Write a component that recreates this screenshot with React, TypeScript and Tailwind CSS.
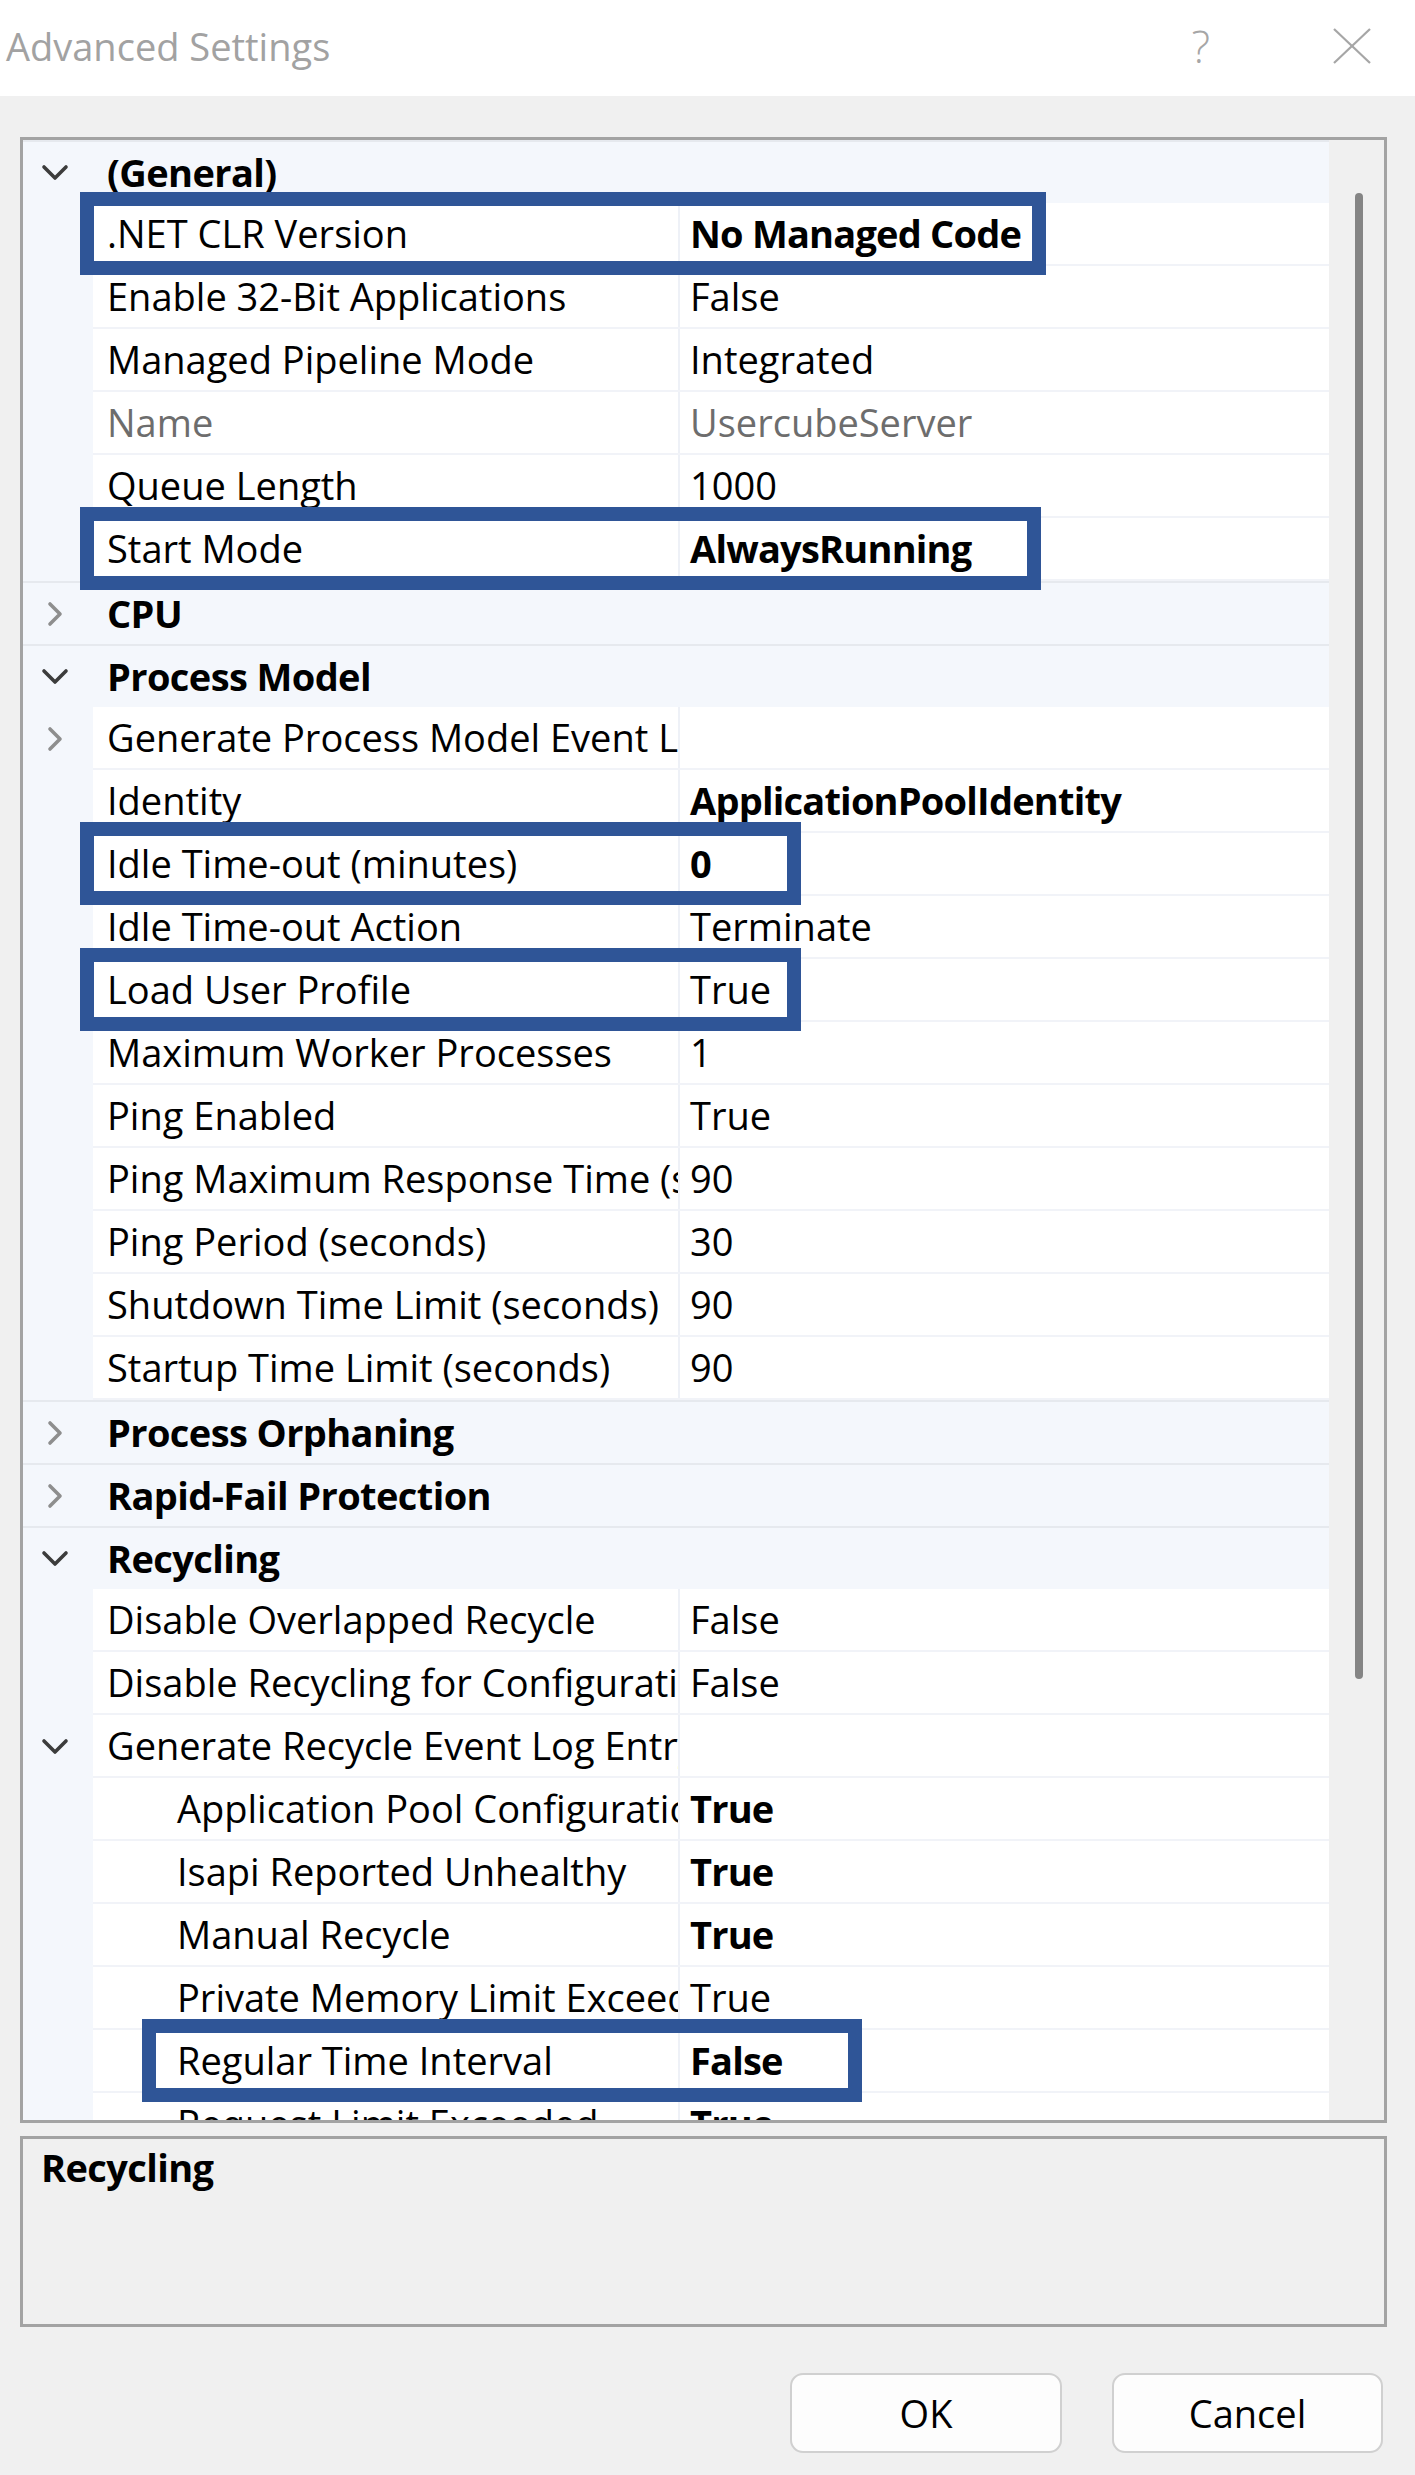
import React from "react";

type Row =
  | { kind: "cat"; label: string; open: boolean }
  | {
      kind: "prop";
      name: string;
      value: string;
      bold?: boolean;
      disabled?: boolean;
      level?: 1 | 2;
      expand?: "open" | "closed";
      box?: string;
    };

const rows: Row[] = [
  { kind: "cat", label: "(General)", open: true },
  { kind: "prop", name: ".NET CLR Version", value: "No Managed Code", bold: true, box: "left-[57px] w-[966px]" },
  { kind: "prop", name: "Enable 32-Bit Applications", value: "False" },
  { kind: "prop", name: "Managed Pipeline Mode", value: "Integrated" },
  { kind: "prop", name: "Name", value: "UsercubeServer", disabled: true },
  { kind: "prop", name: "Queue Length", value: "1000" },
  { kind: "prop", name: "Start Mode", value: "AlwaysRunning", bold: true, box: "left-[57px] w-[961px]" },
  { kind: "cat", label: "CPU", open: false },
  { kind: "cat", label: "Process Model", open: true },
  { kind: "prop", name: "Generate Process Model Event Log Entry", value: "", expand: "closed" },
  { kind: "prop", name: "Identity", value: "ApplicationPoolIdentity", bold: true },
  { kind: "prop", name: "Idle Time-out (minutes)", value: "0", bold: true, box: "left-[57px] w-[721px]" },
  { kind: "prop", name: "Idle Time-out Action", value: "Terminate" },
  { kind: "prop", name: "Load User Profile", value: "True", box: "left-[57px] w-[721px]" },
  { kind: "prop", name: "Maximum Worker Processes", value: "1" },
  { kind: "prop", name: "Ping Enabled", value: "True" },
  { kind: "prop", name: "Ping Maximum Response Time (seconds)", value: "90" },
  { kind: "prop", name: "Ping Period (seconds)", value: "30" },
  { kind: "prop", name: "Shutdown Time Limit (seconds)", value: "90" },
  { kind: "prop", name: "Startup Time Limit (seconds)", value: "90" },
  { kind: "cat", label: "Process Orphaning", open: false },
  { kind: "cat", label: "Rapid-Fail Protection", open: false },
  { kind: "cat", label: "Recycling", open: true },
  { kind: "prop", name: "Disable Overlapped Recycle", value: "False" },
  { kind: "prop", name: "Disable Recycling for Configuration Changes", value: "False" },
  { kind: "prop", name: "Generate Recycle Event Log Entry", value: "", expand: "open" },
  { kind: "prop", name: "Application Pool Configuration Changed", value: "True", bold: true, level: 2 },
  { kind: "prop", name: "Isapi Reported Unhealthy", value: "True", bold: true, level: 2 },
  { kind: "prop", name: "Manual Recycle", value: "True", bold: true, level: 2 },
  { kind: "prop", name: "Private Memory Limit Exceeded", value: "True", level: 2 },
  { kind: "prop", name: "Regular Time Interval", value: "False", bold: true, level: 2, box: "left-[119px] w-[720px]" },
  { kind: "prop", name: "Request Limit Exceeded", value: "True", bold: true, level: 2 },
];

function ChevronDown() {
  return (
    <svg width="30" height="18" viewBox="0 0 30 18" fill="none">
      <polyline points="4,3 15,14 26,3" stroke="#3c3c3c" strokeWidth="3.6" strokeLinecap="round" strokeLinejoin="round" />
    </svg>
  );
}

function ChevronRight() {
  return (
    <svg width="16" height="26" viewBox="0 0 16 26" fill="none">
      <polyline points="3,3 13,13 3,23" stroke="#8e8e8e" strokeWidth="3.6" strokeLinecap="round" strokeLinejoin="round" />
    </svg>
  );
}

function Gutter({ chevron }: { chevron?: "open" | "closed" }) {
  return (
    <div className="w-[70px] h-full shrink-0 bg-[#f4f7fc] flex items-center">
      <div className="ml-[17px] w-[30px] flex items-center justify-center">
        {chevron === "open" ? <ChevronDown /> : chevron === "closed" ? <ChevronRight /> : null}
      </div>
    </div>
  );
}

function RowView({ row }: { row: Row }) {
  if (row.kind === "cat") {
    return (
      <div className="h-[63px] flex bg-[#f4f7fc] border-t-2 border-[#e6e9ee]">
        <Gutter chevron={row.open ? "open" : "closed"} />
        <div className="flex items-center pl-[14px] font-bold tracking-[-0.6px] text-black whitespace-nowrap">{row.label}</div>
      </div>
    );
  }
  const textColor = row.disabled ? "text-[#6d6d6d]" : "text-black";
  return (
    <div className="relative h-[63px] flex">
      <Gutter chevron={row.expand} />
      <div className="flex-1 flex bg-white border-b-2 border-[#f1f3f8]">
        <div
          className={
            "w-[585px] shrink-0 overflow-hidden whitespace-nowrap flex items-center " +
            (row.level === 2 ? "pl-[84px] " : "pl-[14px] ") +
            textColor
          }
        >
          {row.name}
        </div>
        <div className="w-[2px] shrink-0 bg-[#eef1f7]" />
        <div
          className={
            "flex-1 flex items-center pl-[10px] whitespace-nowrap " +
            textColor +
            (row.bold ? " font-bold tracking-[-0.8px]" : "")
          }
        >
          {row.value}
        </div>
      </div>
      {row.box ? (
        <div className={"absolute -top-[11px] h-[83px] border-[14px] border-[#2f5597] z-10 pointer-events-none " + row.box} />
      ) : null}
    </div>
  );
}

export default function App() {
  return (
    <div
      className="w-[1415px] h-[2475px] bg-[#f0f0f0] text-[38px] text-black overflow-hidden"
      style={{ fontFamily: '"Open Sans", "Noto Sans", Arial, sans-serif' }}
    >
      {/* Title bar */}
      <div className="h-[96px] bg-white flex items-center pb-[4px]">
        <div className="pl-[6px] text-[#a2a2a2]">Advanced Settings</div>
        <div className="flex-1" />
        <div className="text-[44px] font-light text-[#a6a6a6] mr-[122px] leading-none">?</div>
        <svg width="40" height="36" viewBox="0 0 40 36" className="mr-[43px]">
          <line x1="2" y1="1" x2="38" y2="35" stroke="#a6a6a6" strokeWidth="2.2" />
          <line x1="38" y1="1" x2="2" y2="35" stroke="#a6a6a6" strokeWidth="2.2" />
        </svg>
      </div>

      {/* Property grid */}
      <div className="mt-[41px] ml-[20px] w-[1367px] h-[1986px] border-[3px] border-[#a3a3a3] flex overflow-hidden">
        <div className="w-[1306px] shrink-0 h-full overflow-hidden">
          {rows.map((r, i) => (
            <RowView key={i} row={r} />
          ))}
        </div>
        <div className="flex-1 h-full bg-[#f0f0f0] pt-[53px] pl-[26px]">
          <div className="w-[8px] h-[1486px] rounded-full bg-[#858585]" />
        </div>
      </div>

      {/* Description panel */}
      <div className="mt-[13px] ml-[20px] w-[1367px] h-[191px] border-[3px] border-[#a3a3a3] bg-[#f0f0f0] pl-[18px] pt-[3px]">
        <div className="font-bold tracking-[-0.6px] leading-[50px]">Recycling</div>
      </div>

      {/* Buttons */}
      <div className="mt-[46px] flex justify-end gap-[50px] pr-[32px]">
        <button className="w-[272px] h-[80px] rounded-[13px] border-2 border-[#d0d0d0] bg-[#fdfdfd] flex items-center justify-center text-black">
          OK
        </button>
        <button className="w-[271px] h-[80px] rounded-[13px] border-2 border-[#d0d0d0] bg-[#fdfdfd] flex items-center justify-center text-black">
          Cancel
        </button>
      </div>
    </div>
  );
}
